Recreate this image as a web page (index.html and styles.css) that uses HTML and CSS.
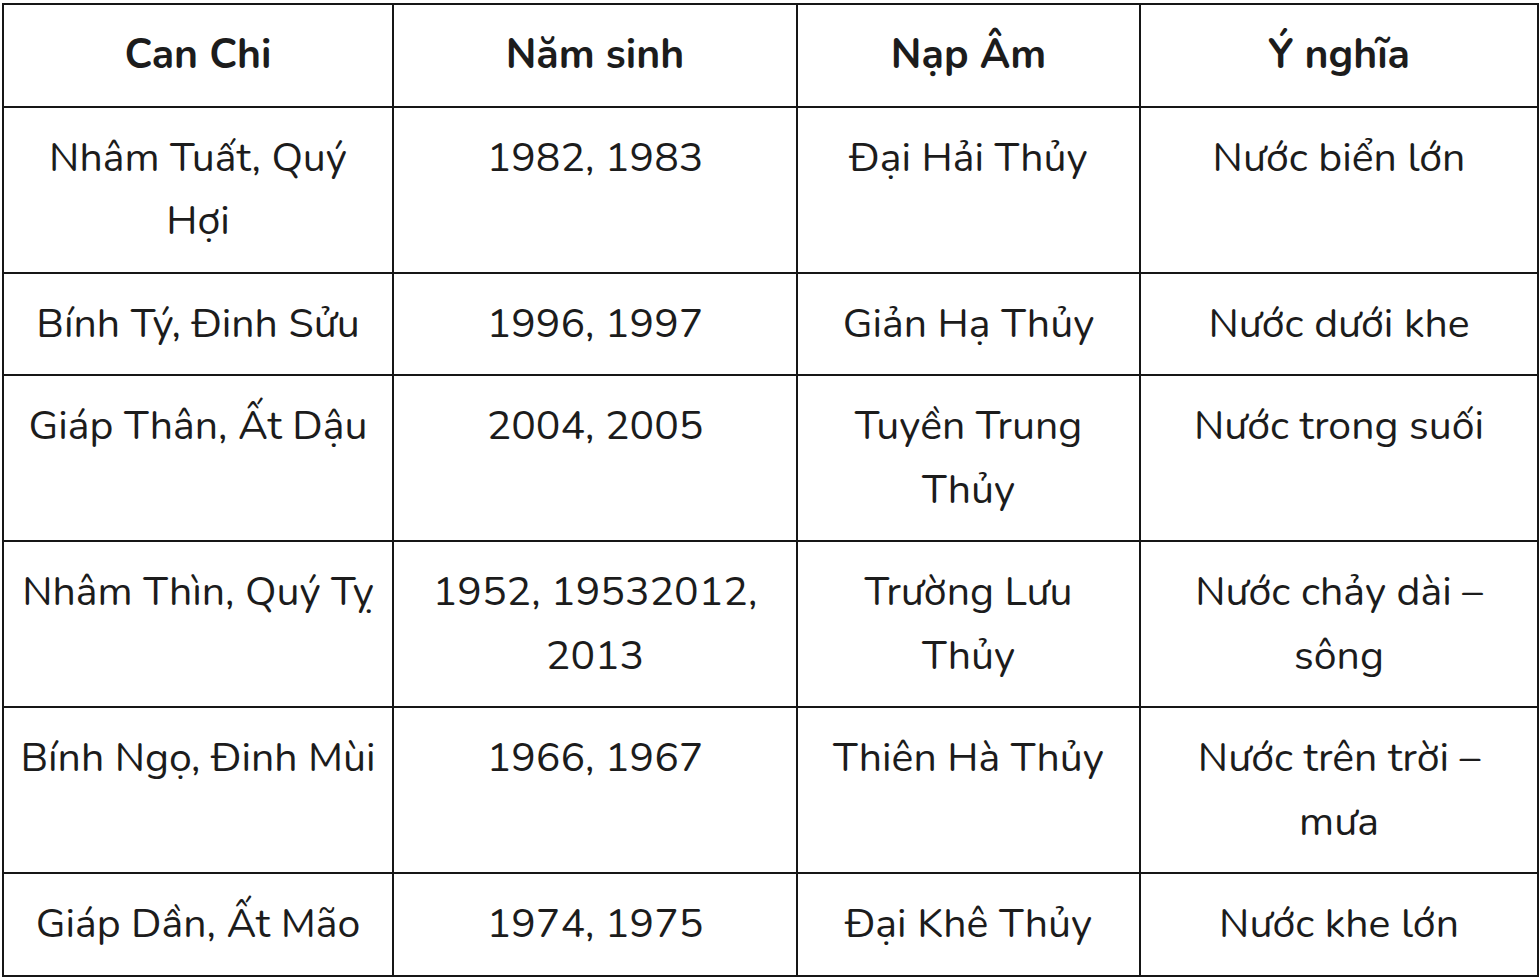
FILE: index.html
```html
<!DOCTYPE html>
<html lang="vi">
<head>
<meta charset="utf-8">
<title>Nạp Âm hành Thủy</title>
<link rel="stylesheet" href="styles.css">
</head>
<body>
<table class="napam">
  <colgroup>
    <col class="c1">
    <col class="c2">
    <col class="c3">
    <col class="c4">
  </colgroup>
  <thead>
    <tr><th>Can Chi</th><th>Năm sinh</th><th>Nạp Âm</th><th>Ý nghĩa</th></tr>
  </thead>
  <tbody>
    <tr><td>Nhâm Tuất, Quý Hợi</td><td>1982, 1983</td><td>Đại Hải Thủy</td><td>Nước biển lớn</td></tr>
    <tr><td>Bính Tý, Đinh Sửu</td><td>1996, 1997</td><td>Giản Hạ Thủy</td><td>Nước dưới khe</td></tr>
    <tr><td>Giáp Thân, Ất Dậu</td><td>2004, 2005</td><td>Tuyền Trung Thủy</td><td>Nước trong suối</td></tr>
    <tr><td>Nhâm Thìn, Quý Tỵ</td><td>1952, 19532012, 2013</td><td>Trường Lưu Thủy</td><td>Nước chảy dài – sông</td></tr>
    <tr><td>Bính Ngọ, Đinh Mùi</td><td>1966, 1967</td><td>Thiên Hà Thủy</td><td>Nước trên trời – mưa</td></tr>
    <tr><td>Giáp Dần, Ất Mão</td><td>1974, 1975</td><td>Đại Khê Thủy</td><td>Nước khe lớn</td></tr>
  </tbody>
</table>
</body>
</html>
```
FILE: styles.css
```css
html, body {
  margin: 0;
  padding: 0;
  background: #ffffff;
}
body {
  padding: 3px 0 0 2px;
  font-family: "Nunito", "Lato", "Open Sans", sans-serif;
  color: #1c1c1c;
}
.napam {
  border-collapse: collapse;
  table-layout: fixed;
  width: 1535px;
  border: 2.5px solid #161616;
}
.c1 { width: 390px; }
.c2 { width: 404px; }
.c3 { width: 343px; }
.c4 { width: 398px; }
.napam th,
.napam td {
  border: 2.5px solid #161616;
  padding: 18px 14px 19px;
  text-align: center;
  vertical-align: top;
  font-size: 41px;
  line-height: 63.5px;
}
.napam td:nth-child(3) {
  padding-left: 22px;
  padding-right: 22px;
}
.napam th {
  font-weight: 700;
}
.napam td {
  font-weight: 400;
}
```
